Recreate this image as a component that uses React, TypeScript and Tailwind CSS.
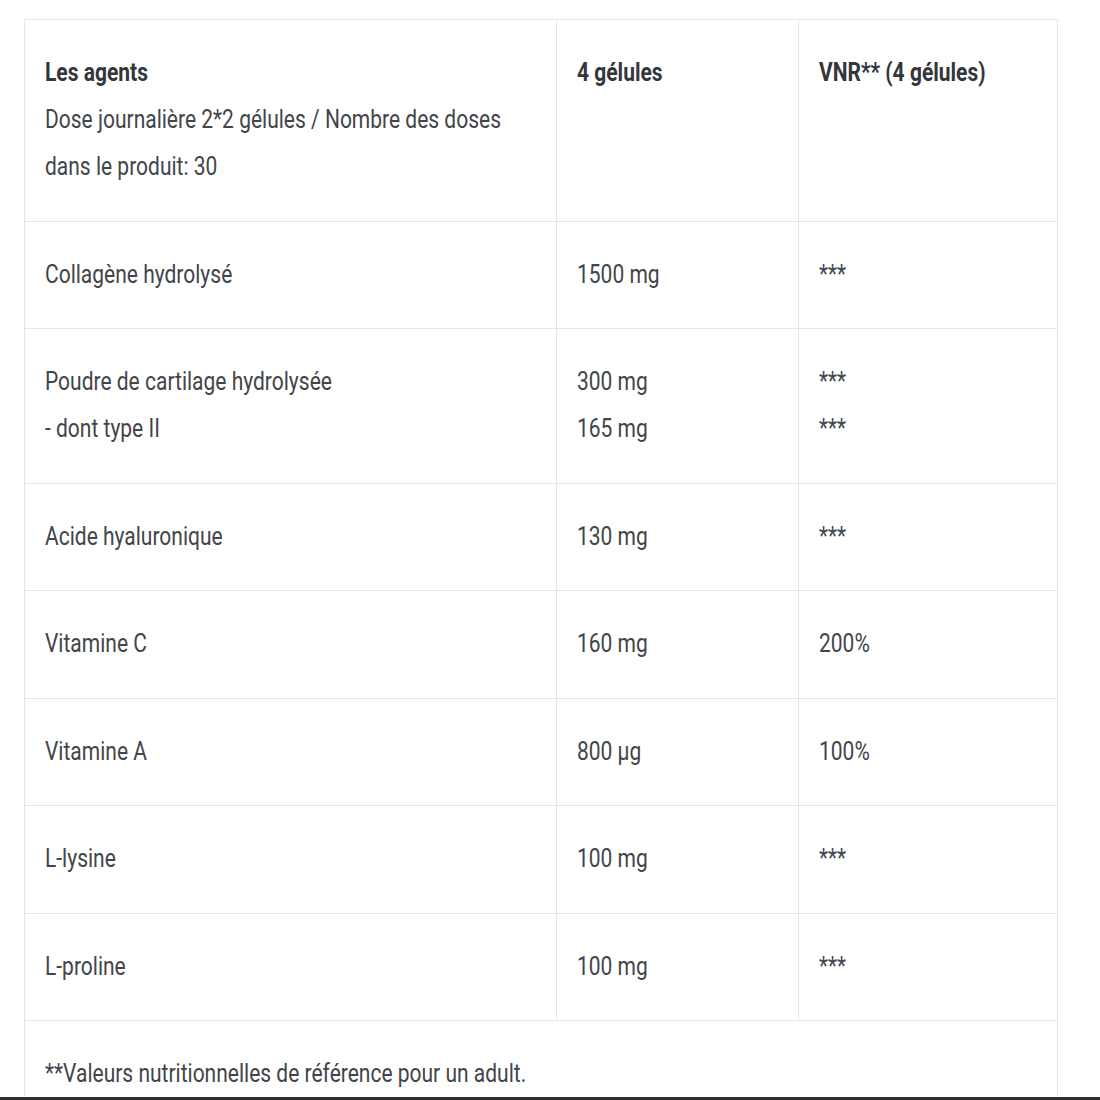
import React from 'react';

type Row = { name: string[]; qty: string[]; vnr: string[] };

const rows: Row[] = [
  { name: ['Collagène hydrolysé'], qty: ['1500 mg'], vnr: ['***'] },
  { name: ['Poudre de cartilage hydrolysée', '- dont type II'], qty: ['300 mg', '165 mg'], vnr: ['***', '***'] },
  { name: ['Acide hyaluronique'], qty: ['130 mg'], vnr: ['***'] },
  { name: ['Vitamine C'], qty: ['160 mg'], vnr: ['200%'] },
  { name: ['Vitamine A'], qty: ['800 µg'], vnr: ['100%'] },
  { name: ['L-lysine'], qty: ['100 mg'], vnr: ['***'] },
  { name: ['L-proline'], qty: ['100 mg'], vnr: ['***'] },
];

const Line = ({ children, bold }: { children: React.ReactNode; bold?: boolean }) => (
  <div className="h-[47px] leading-[47px] whitespace-nowrap">
    <span className={`inline-block origin-center scale-y-[1.22] ${bold ? 'font-bold text-[#33363a]' : ''}`}>{children}</span>
  </div>
);

const Cell = ({ lines, bold }: { lines: string[]; bold?: boolean }) => (
  <td className="border border-[#e6e6e6] px-[20px] pt-[30px] pb-[29.5px] align-top">
    {lines.map((l, i) => (
      <Line key={i} bold={bold && i === 0}>{l}</Line>
    ))}
  </td>
);

const App: React.FC = () => {
  return (
    <div className="min-h-screen bg-white pl-[24px] pt-[19px] text-[21px] text-[#424549] font-['Roboto',sans-serif]">
      <table className="w-[1033px] border-collapse table-fixed">
        <colgroup>
          <col className="w-[532px]" />
          <col className="w-[242px]" />
          <col className="w-[259px]" />
        </colgroup>
        <tbody>
          <tr>
            <Cell bold lines={['Les agents', 'Dose journalière 2*2 gélules / Nombre des doses', 'dans le produit: 30']} />
            <Cell bold lines={['4 gélules']} />
            <Cell bold lines={['VNR** (4 gélules)']} />
          </tr>
          {rows.map((r, i) => (
            <tr key={i}>
              <Cell lines={r.name} />
              <Cell lines={r.qty} />
              <Cell lines={r.vnr} />
            </tr>
          ))}
          <tr>
            <td colSpan={3} className="border border-[#e6e6e6] px-[20px] pt-[30px] pb-[29.5px]">
              <Line>**Valeurs nutritionnelles de référence pour un adult.</Line>
            </td>
          </tr>
        </tbody>
      </table>
      <div className="fixed bottom-0 left-0 right-0 h-[3px] bg-[#2e2e2e]" />
    </div>
  );
};

export default App;
